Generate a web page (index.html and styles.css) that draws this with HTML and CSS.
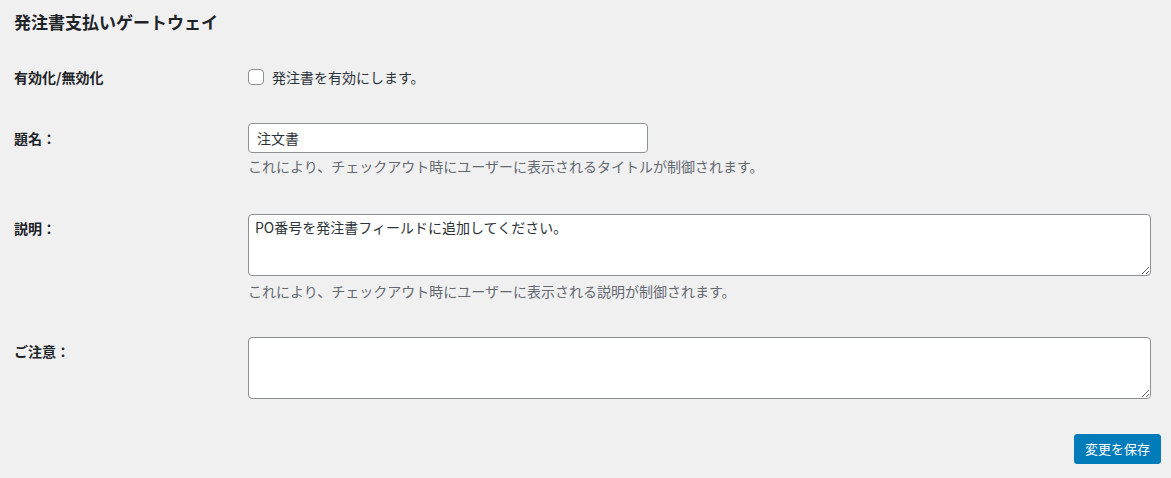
FILE: index.html
```html
<!DOCTYPE html>
<html lang="ja">
<head>
<meta charset="utf-8">
<title>発注書支払いゲートウェイ</title>
<link rel="stylesheet" href="styles.css">
</head>
<body>
<div class="wrap">
  <h2 class="title">発注書支払いゲートウェイ</h2>
  <form class="form">
    <div class="row row-enable">
      <div class="label">有効化/無効化</div>
      <div class="field">
        <label class="check"><input type="checkbox" class="checkbox"><span>発注書を有効にします。</span></label>
      </div>
    </div>
    <div class="row row-title">
      <div class="label label-mid">題名：</div>
      <div class="field">
        <input type="text" class="text-input" value="注文書">
        <p class="desc desc-title">これにより、チェックアウト時にユーザーに表示されるタイトルが制御されます。</p>
      </div>
    </div>
    <div class="row row-desc">
      <div class="label label-top">説明：</div>
      <div class="field">
        <textarea class="textarea">PO番号を発注書フィールドに追加してください。</textarea>
        <p class="desc desc-area">これにより、チェックアウト時にユーザーに表示される説明が制御されます。</p>
      </div>
    </div>
    <div class="row row-note">
      <div class="label label-top">ご注意：</div>
      <div class="field">
        <textarea class="textarea"></textarea>
      </div>
    </div>
    <div class="actions">
      <button type="button" class="button-primary">変更を保存</button>
    </div>
  </form>
</div>
</body>
</html>
```
FILE: styles.css
```css
* { box-sizing: border-box; }
html, body {
  margin: 0;
  padding: 0;
  background: #f0f0f1;
}
body {
  font-family: "Noto Sans CJK JP", "Noto Sans", sans-serif;
  font-size: 14px;
  color: #1d2327;
}
.wrap {
  padding: 0 20px 0 14px;
}
.title {
  margin: 11px 0 0;
  font-size: 17px;
  line-height: 22px;
  font-weight: 700;
  color: #1d2327;
}
.form {
  display: flex;
  flex-direction: column;
}
.row {
  display: flex;
}
.label {
  width: 234px;
  flex: none;
  font-weight: 700;
  line-height: 20px;
}
.field {
  flex: 1;
  display: flex;
  flex-direction: column;
  align-items: flex-start;
}
.row-enable {
  margin-top: 34px;
  align-items: center;
  height: 20px;
}
.row-title {
  margin-top: 36px;
}
.label-mid {
  padding-top: 5px;
}
.label-top {
  padding-top: 4px;
}
.row-desc {
  margin-top: 38px;
}
.row-note {
  margin-top: 36px;
}
.check {
  display: flex;
  align-items: center;
  gap: 8px;
  line-height: 20px;
  color: #2c3338;
}
.checkbox {
  appearance: none;
  -webkit-appearance: none;
  margin: 0;
  width: 16px;
  height: 16px;
  border: 1px solid #8c8f94;
  border-radius: 4px;
  background: #fff;
}
.text-input {
  width: 400px;
  height: 30px;
  margin: 0;
  padding: 0 8px;
  border: 1px solid #8c8f94;
  border-radius: 4px;
  background: #fff;
  font-family: inherit;
  font-size: 14px;
  color: #2c3338;
  line-height: 28px;
}
.textarea {
  display: block;
  width: 903px;
  height: 62px;
  margin: 0;
  padding: 2px 6px;
  border: 1px solid #8c8f94;
  border-radius: 4px;
  background: #fff;
  font-family: inherit;
  font-size: 14px;
  line-height: 20px;
  color: #2c3338;
  resize: vertical;
}
.desc {
  margin: 0;
  line-height: 20px;
  color: #646970;
}
.desc-title { margin-top: 3px; }
.desc-area { margin-top: 5px; }
.actions {
  display: flex;
  justify-content: flex-end;
  margin-top: 35px;
  margin-right: -10px;
}
.button-primary {
  width: 87px;
  height: 30px;
  padding: 0;
  border: 1px solid #007cba;
  border-radius: 3px;
  background: #007cba;
  color: #fff;
  font-family: inherit;
  font-size: 13px;
  line-height: 28px;
}
```
